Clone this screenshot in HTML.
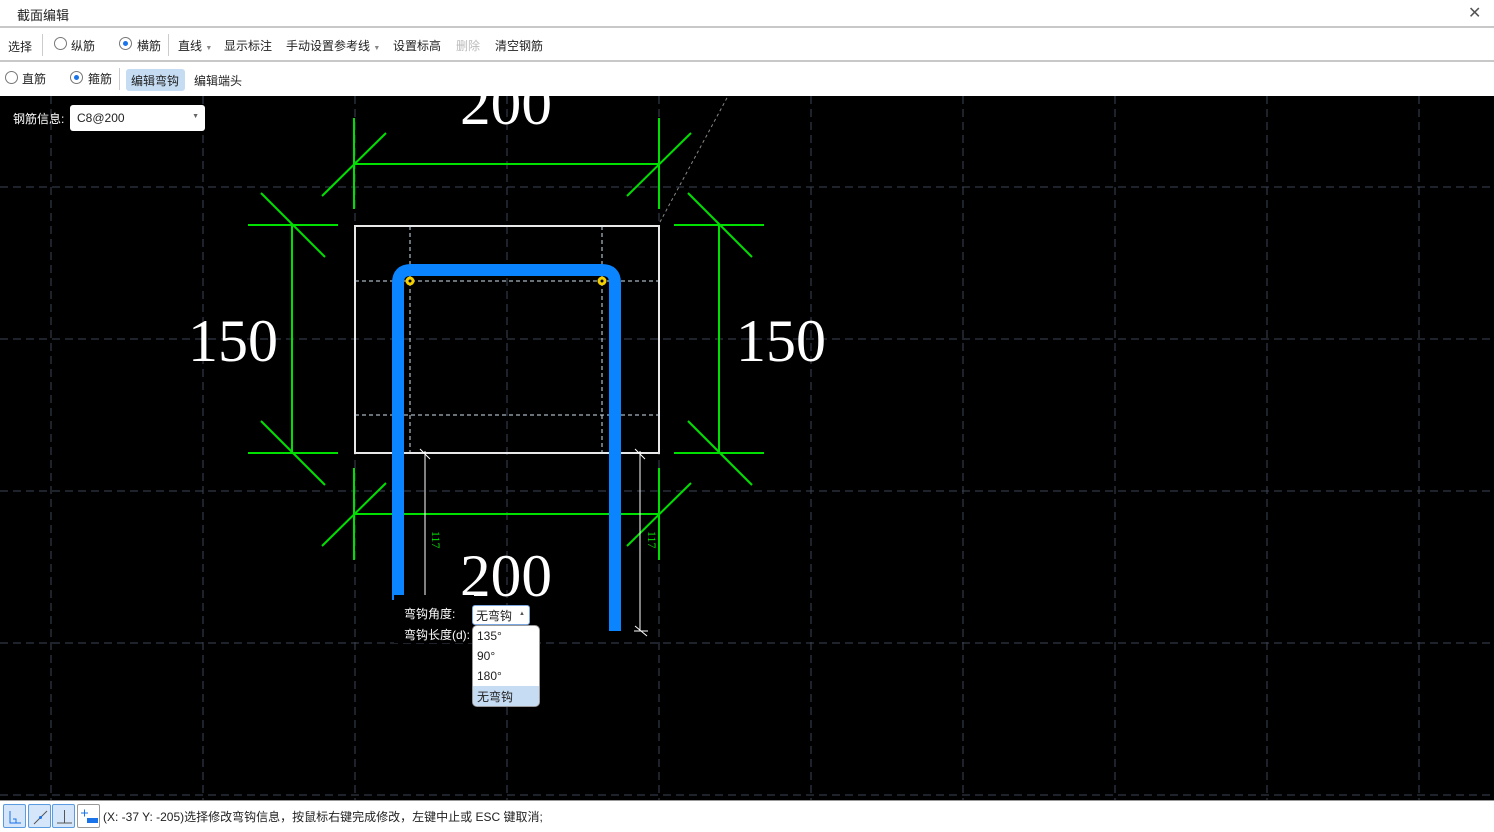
<!DOCTYPE html>
<html><head><meta charset="utf-8"><style>
*{margin:0;padding:0;box-sizing:border-box}
body{width:1494px;height:831px;overflow:hidden;background:#fff;font-family:"Liberation Sans","Noto Sans CJK SC",sans-serif;font-size:12px;color:#222;position:relative}
.abs{position:absolute}
.title{left:0;top:0;width:1494px;height:28px;border-bottom:2px solid #c8c8c8}
.title span{position:absolute;left:17px;top:5px;font-size:13px}
.bar1{left:0;top:29px;width:1494px;height:33px;border-bottom:2px solid #c8c8c8}
.bar2{left:0;top:63px;width:1494px;height:33px}
.t{position:absolute;top:8px;font-size:12px;white-space:nowrap}
.rad{position:absolute;width:13px;height:13px;border:1px solid #777;border-radius:50%;background:#fff}
.rad.on::after{content:"";position:absolute;left:3px;top:3px;width:5px;height:5px;border-radius:50%;background:#1a73e8}
.sep{position:absolute;width:1px;height:22px;background:#ccc}
.status{left:0;top:800px;width:1494px;height:31px;background:#fff;border-top:1px solid #999}
.ib{position:absolute;top:3px;width:23px;height:24px;border:1px solid #5b9be0;background:#d6e6fa;border-radius:2px}
</style></head><body>
<div class="abs title"><span>截面编辑</span><span style="left:1468px;top:3px;font-size:16px;color:#555">✕</span></div>
<div class="abs bar1">
<span class="t" style="left:8px;top:9px">选择</span><div class="sep" style="left:42px;top:5px"></div>
<div class="rad" style="left:54px;top:8px"></div><span class="t" style="left:71px">纵筋</span>
<div class="rad on" style="left:119px;top:8px"></div><span class="t" style="left:137px">横筋</span>
<div class="sep" style="left:168px;top:5px"></div>
<span class="t" style="left:178px">直线 <span style="font-size:7px;color:#888">▼</span></span>
<span class="t" style="left:224px">显示标注</span>
<span class="t" style="left:286px">手动设置参考线 <span style="font-size:7px;color:#888">▼</span></span>
<span class="t" style="left:393px">设置标高</span>
<span class="t" style="left:456px;color:#bbb">删除</span>
<span class="t" style="left:495px">清空钢筋</span>
</div>
<div class="abs bar2">
<div class="rad" style="left:5px;top:8px"></div><span class="t" style="left:22px;top:7px">直筋</span>
<div class="rad on" style="left:70px;top:8px"></div><span class="t" style="left:88px;top:7px">箍筋</span>
<div class="sep" style="left:119px;top:5px"></div>
<div style="position:absolute;left:126px;top:6px;width:59px;height:22px;background:#c5dcf3;border-radius:3px"></div>
<span class="t" style="left:131px;top:9px">编辑弯钩</span>
<span class="t" style="left:194px;top:9px">编辑端头</span>
</div>
<svg class="abs" style="left:0;top:96px" width="1494" height="704" viewBox="0 96 1494 704">
<rect x="0" y="96" width="1494" height="704" fill="#000"/>
<g stroke="#3c4456" stroke-width="1" stroke-dasharray="8,5">
<line x1="51" y1="96" x2="51" y2="800"/><line x1="203" y1="96" x2="203" y2="800"/><line x1="355" y1="96" x2="355" y2="800"/><line x1="507" y1="96" x2="507" y2="800"/><line x1="659" y1="96" x2="659" y2="800"/><line x1="811" y1="96" x2="811" y2="800"/><line x1="963" y1="96" x2="963" y2="800"/><line x1="1115" y1="96" x2="1115" y2="800"/><line x1="1267" y1="96" x2="1267" y2="800"/><line x1="1419" y1="96" x2="1419" y2="800"/>
<line x1="0" y1="187" x2="1494" y2="187"/><line x1="0" y1="339" x2="1494" y2="339"/><line x1="0" y1="491" x2="1494" y2="491"/><line x1="0" y1="643" x2="1494" y2="643"/><line x1="0" y1="795" x2="1494" y2="795"/>
</g>
<line x1="660" y1="222" x2="728" y2="96" stroke="#888" stroke-dasharray="3,3"/>
<g stroke="#00e000" stroke-width="2">
<line x1="354" y1="118" x2="354" y2="209"/><line x1="659" y1="118" x2="659" y2="209"/><line x1="354" y1="164" x2="659" y2="164"/>
<line x1="322" y1="196" x2="386" y2="133"/><line x1="627" y1="196" x2="691" y2="133"/>
<line x1="248" y1="225" x2="338" y2="225"/><line x1="248" y1="453" x2="338" y2="453"/><line x1="292" y1="225" x2="292" y2="453"/>
<line x1="261" y1="193" x2="325" y2="257"/><line x1="261" y1="421" x2="325" y2="485"/>
<line x1="674" y1="225" x2="764" y2="225"/><line x1="674" y1="453" x2="764" y2="453"/><line x1="719" y1="225" x2="719" y2="453"/>
<line x1="688" y1="193" x2="752" y2="257"/><line x1="688" y1="421" x2="752" y2="485"/>
<line x1="354" y1="468" x2="354" y2="560"/><line x1="659" y1="468" x2="659" y2="560"/><line x1="354" y1="514" x2="659" y2="514"/>
<line x1="322" y1="546" x2="386" y2="483"/><line x1="627" y1="546" x2="691" y2="483"/>
</g>
<g font-family="Liberation Serif,serif" font-size="60" fill="#fff">
<text x="506" y="124" text-anchor="middle" textLength="92" lengthAdjust="spacingAndGlyphs">200</text>
<text x="506" y="596" text-anchor="middle" textLength="92" lengthAdjust="spacingAndGlyphs">200</text>
<text x="233" y="361" text-anchor="middle" textLength="90" lengthAdjust="spacingAndGlyphs">150</text>
<text x="781" y="361" text-anchor="middle" textLength="90" lengthAdjust="spacingAndGlyphs">150</text>
</g>
<rect x="355" y="226" width="304" height="227" fill="none" stroke="#e8e8e8" stroke-width="2"/>
<g stroke="#cfe0f0" stroke-width="1" stroke-dasharray="4,3">
<line x1="355" y1="281" x2="659" y2="281"/><line x1="355" y1="415" x2="659" y2="415"/>
<line x1="410" y1="226" x2="410" y2="453"/><line x1="602" y1="226" x2="602" y2="453"/>
</g>
<path d="M398 600 V283 Q398 270 411 270 H602 Q615 270 615 283 V631" fill="none" stroke="#0a84ff" stroke-width="12"/>
<circle cx="410" cy="281" r="4.5" fill="#f5d000"/><circle cx="602" cy="281" r="4.5" fill="#f5d000"/>
<circle cx="410" cy="281" r="1.5" fill="#000"/><circle cx="602" cy="281" r="1.5" fill="#000"/>
<g stroke="#fff" stroke-width="1">
<line x1="425" y1="451" x2="425" y2="595"/><line x1="420" y1="449" x2="430" y2="459"/>
<line x1="640" y1="451" x2="640" y2="631"/><line x1="635" y1="449" x2="645" y2="459"/>
<line x1="635" y1="626" x2="647" y2="636"/><line x1="634" y1="631" x2="648" y2="631"/>
</g>
<text x="432" y="531" fill="#00e000" font-family="Liberation Serif,serif" font-size="12" transform="rotate(90 432 531)">117</text>
<text x="648" y="531" fill="#00e000" font-family="Liberation Serif,serif" font-size="12" transform="rotate(90 648 531)">117</text>
<rect x="394" y="595" width="80" height="48" fill="#000"/>
</svg>
<div class="abs" style="left:13px;top:110px;color:#fff;font-size:12px">钢筋信息:</div>
<div class="abs" style="left:70px;top:105px;width:135px;height:26px;background:#fff;border-radius:3px;padding:6px 7px;font-size:12px">C8@200<span style="position:absolute;right:6px;top:8px;font-size:7px;color:#666">▼</span></div>
<div class="abs" style="left:404px;top:605px;color:#fff;font-size:12px">弯钩角度:</div>
<div class="abs" style="left:404px;top:626px;color:#fff;font-size:12px">弯钩长度(d):</div>
<div class="abs" style="left:472px;top:605px;width:58px;height:20px;background:#fff;border:1px solid #7aa7e0;border-radius:3px;font-size:12px;padding:1px 3px">无弯钩<span style="position:absolute;right:4px;top:5px;font-size:6px;color:#555">▲</span></div>
<div class="abs" style="left:472px;top:625px;width:68px;height:82px;background:#fff;border:1px solid #999;border-radius:5px;font-size:12px;overflow:hidden">
<div style="height:20px;padding:3px 4px">135°</div><div style="height:20px;padding:3px 4px">90°</div><div style="height:20px;padding:3px 4px">180°</div><div style="height:20px;padding:2px 4px;background:#c5dcf3">无弯钩</div></div>
<div class="abs status">
<div class="ib" style="left:3px"><svg width="23" height="24"><path d="M6 6V18H17" stroke="#1a73e8" fill="none"/><path d="M9 14H12V18" stroke="#1a73e8" fill="none"/></svg></div>
<div class="ib" style="left:28px"><svg width="23" height="24"><path d="M5 19L18 6" stroke="#555" fill="none"/><circle cx="11.5" cy="12.5" r="1.5" fill="#1a73e8"/></svg></div>
<div class="ib" style="left:52px"><svg width="23" height="24"><path d="M4 18H19M11.5 5V18" stroke="#555" fill="none"/></svg></div>
<div class="ib" style="left:77px;background:#fff;border-color:#999"><svg width="23" height="24"><path d="M3 8H10M6.5 4.5V11.5" stroke="#1a73e8" fill="none"/><rect x="9" y="13" width="11" height="5" fill="#1a73e8"/></svg></div>
<span style="position:absolute;left:103px;top:7px;font-size:12px">(X: -37 Y: -205)选择修改弯钩信息，按鼠标右键完成修改，左键中止或 ESC 键取消;</span>
</div>
</body></html>
